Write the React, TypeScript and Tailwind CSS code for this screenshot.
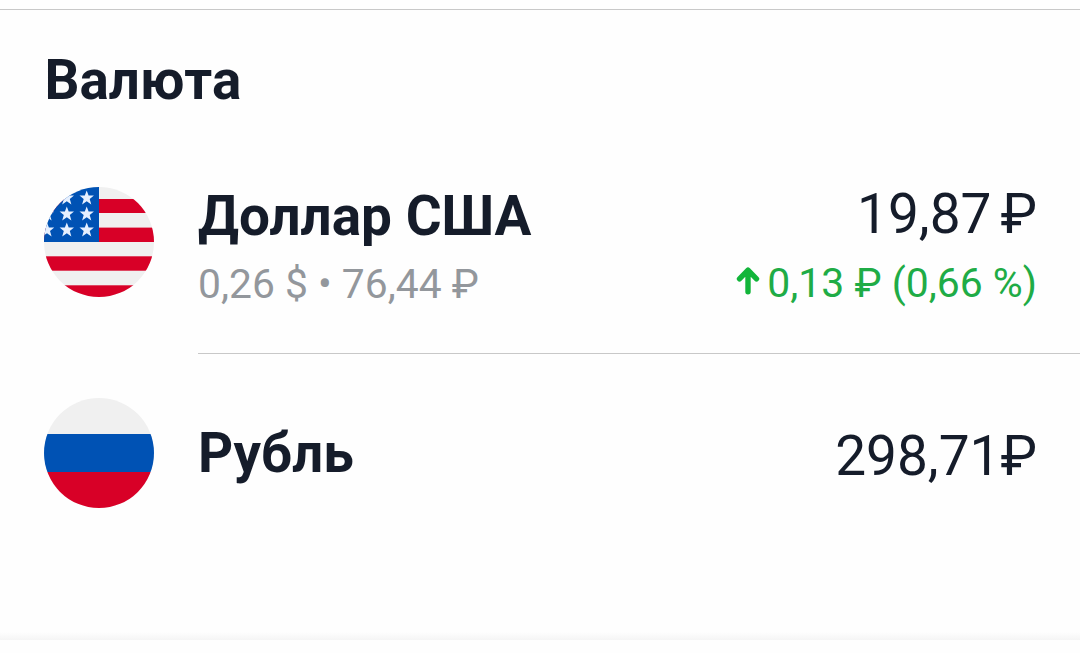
const STAR = "M0 -7.6L1.9 -2.4L7.2 -2.4L3 1L4.6 6.4L0 3.2L-4.6 6.4L-3 1L-7.2 -2.4L-1.9 -2.4Z";

function UsFlag() {
  return (
    <svg viewBox="0 0 110 110" className="size-[110px] shrink-0">
      <clipPath id="us">
        <circle cx="55" cy="55" r="55" />
      </clipPath>
      <g clipPath="url(#us)">
        <rect width="110" height="110" fill="#f0f0f0" />
        <rect y="12" width="110" height="14" fill="#d80027" />
        <rect y="40.6" width="110" height="14.4" fill="#d80027" />
        <rect y="69.3" width="110" height="14.4" fill="#d80027" />
        <rect y="98.3" width="110" height="12" fill="#d80027" />
        <rect width="55" height="55" fill="#0052b4" />
        {[11, 27, 43].map((y) =>
          [3, 22.8, 42.7].map((x) => (
            <path key={`${x}-${y}`} d={STAR} transform={`translate(${x} ${y})`} fill="#e6f0ff" />
          ))
        )}
      </g>
    </svg>
  );
}

function RuFlag() {
  return (
    <svg viewBox="0 0 110 110" className="size-[110px] shrink-0">
      <clipPath id="ru">
        <circle cx="55" cy="55" r="55" />
      </clipPath>
      <g clipPath="url(#ru)">
        <rect width="110" height="110" fill="#f0f0f0" />
        <rect y="36" width="110" height="38" fill="#0052b4" />
        <rect y="74" width="110" height="36" fill="#d80027" />
      </g>
    </svg>
  );
}

function ArrowUp() {
  return (
    <svg
      viewBox="0 0 24 28"
      className="w-6 h-7 mb-1 shrink-0"
      fill="none"
      stroke="#12b53a"
      strokeWidth="5.4"
      strokeLinecap="round"
      strokeLinejoin="round"
    >
      <path d="M12 24.8V4M3.5 11.8L12 3.2L20.5 11.8" />
    </svg>
  );
}

export default function App() {
  return (
    <div className="h-[653px] overflow-hidden bg-[#fefefe] pt-[9px] font-['Roboto',sans-serif] text-[#151c2a] whitespace-nowrap">
      <div className="flex flex-col h-[631px] border-t border-[#c8c8c8]">
        <h1 className="pt-[38px] pl-[44.5px] text-[54.8px] leading-[64px] font-bold">Валюта</h1>

        <div className="flex pl-11 mt-[75px] h-[167px]">
          <UsFlag />
          <div className="flex flex-1 justify-between ml-11 pr-[43px] border-b border-[#c8c8c8]">
            <div>
              <div className="-mt-[3px] text-[54.9px] leading-[64px] font-bold">Доллар США</div>
              <div className="mt-3 text-[40.8px] leading-[48px] text-[#93979c]">0,26 $ • 76,44 ₽</div>
            </div>
            <div className="flex flex-col items-end">
              <div className="-mt-[5px] text-[55px] leading-[64px]">
                19,87<span className="ml-[9px]">₽</span>
              </div>
              <div className="flex items-center mt-[13px] text-[40.9px] leading-[48px] text-[#1fac46]">
                <ArrowUp />
                <span className="ml-[7px]">0,13 ₽ (0,66 %)</span>
              </div>
            </div>
          </div>
        </div>

        <div className="flex pl-11 pr-[43px] mt-11">
          <RuFlag />
          <div className="flex flex-1 justify-between ml-11">
            <div className="mt-[23px] text-[54.6px] leading-[64px] font-bold">Рубль</div>
            <div className="mt-[26px] text-[55px] leading-[64px]">298,71₽</div>
          </div>
        </div>

        <div className="mt-auto h-2 bg-linear-to-b from-[#fefefe] to-[#f5f5f5]" />
      </div>
    </div>
  );
}
